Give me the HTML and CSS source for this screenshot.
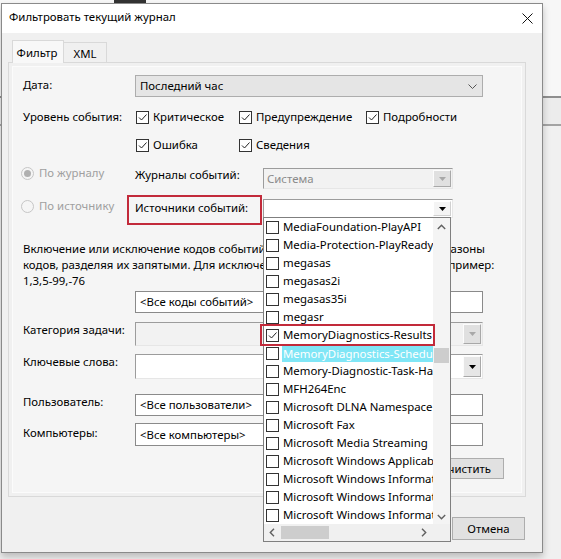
FILE: index.html
```html
<!DOCTYPE html>
<html lang="ru">
<head>
<meta charset="utf-8">
<title>Фильтровать текущий журнал</title>
<link rel="stylesheet" href="styles.css">
</head>
<body>
<div class="desktop">
  <div class="topmark"></div>
  <div class="dialog">
    <div class="titlebar">
      <span class="title">Фильтровать текущий журнал</span>
      <svg class="close" width="11" height="11" viewBox="0 0 11 11"><path d="M0.5 0.5L10.5 10.5M10.5 0.5L0.5 10.5" stroke="#111" stroke-width="1" fill="none"/></svg>
    </div>
    <div class="client">
      <div class="tabs">
        <div class="tab active">Фильтр</div>
        <div class="tab">XML</div>
      </div>
      <div class="panel">
        <div class="row row-date">
          <div class="label">Дата:</div>
          <div class="combo date-combo"><span class="ctext">Последний час</span>
            <svg class="chev" width="9" height="5" viewBox="0 0 9 5"><path d="M0.5 0.5L4.5 4.5L8.5 0.5" fill="none" stroke="#555" stroke-width="1"/></svg>
          </div>
        </div>
        <div class="row row-levels">
          <div class="label">Уровень события:</div>
          <div class="levels">
            <label class="chk"><span class="box"><svg width="11" height="11" viewBox="0 0 11 11"><path d="M2 5.5L4.5 8L9.5 2.5" fill="none" stroke="#222" stroke-width="1"/></svg></span>Критическое</label>
            <label class="chk"><span class="box"><svg width="11" height="11" viewBox="0 0 11 11"><path d="M2 5.5L4.5 8L9.5 2.5" fill="none" stroke="#222" stroke-width="1"/></svg></span>Предупреждение</label>
            <label class="chk"><span class="box"><svg width="11" height="11" viewBox="0 0 11 11"><path d="M2 5.5L4.5 8L9.5 2.5" fill="none" stroke="#222" stroke-width="1"/></svg></span>Подробности</label>
            <label class="chk"><span class="box"><svg width="11" height="11" viewBox="0 0 11 11"><path d="M2 5.5L4.5 8L9.5 2.5" fill="none" stroke="#222" stroke-width="1"/></svg></span>Ошибка</label>
            <label class="chk"><span class="box"><svg width="11" height="11" viewBox="0 0 11 11"><path d="M2 5.5L4.5 8L9.5 2.5" fill="none" stroke="#222" stroke-width="1"/></svg></span>Сведения</label>
          </div>
        </div>
        <div class="row row-src1">
          <div class="radio disabled"><span class="rb checked"></span>По журналу</div>
          <div class="sublabel">Журналы событий:</div>
          <div class="combo classic disabled sys-combo"><span class="ctext">Система</span>
            <span class="dbtn"><svg width="7" height="4" viewBox="0 0 7 4"><path d="M0 0H7L3.5 4Z" fill="#a8a8a8"/></svg></span>
          </div>
        </div>
        <div class="row row-src2">
          <div class="radio disabled"><span class="rb"></span>По источнику</div>
          <div class="sublabel marked">Источники событий:</div>
          <div class="combo classic src-combo">
            <span class="dbtn white"><svg width="7" height="4" viewBox="0 0 7 4"><path d="M0 0H7L3.5 4Z" fill="#000"/></svg></span>
            <div class="dropdown">
              <div class="items">
                <div class="li"><span class="cb"></span><span class="lt">MediaFoundation-PlayAPI</span></div>
                <div class="li"><span class="cb"></span><span class="lt">Media-Protection-PlayReady</span></div>
                <div class="li"><span class="cb"></span><span class="lt">megasas</span></div>
                <div class="li"><span class="cb"></span><span class="lt">megasas2i</span></div>
                <div class="li"><span class="cb"></span><span class="lt">megasas35i</span></div>
                <div class="li"><span class="cb"></span><span class="lt">megasr</span></div>
                <div class="li"><span class="cb"><svg width="11" height="11" viewBox="0 0 11 11"><path d="M2 5.5L4.5 8L9.5 2.5" fill="none" stroke="#222" stroke-width="1"/></svg></span><span class="lt">MemoryDiagnostics-Results</span></div>
                <div class="li sel"><span class="cb"></span><span class="lt">MemoryDiagnostics-Scheduled</span></div>
                <div class="li"><span class="cb"></span><span class="lt">Memory-Diagnostic-Task-Handler</span></div>
                <div class="li"><span class="cb"></span><span class="lt">MFH264Enc</span></div>
                <div class="li"><span class="cb"></span><span class="lt">Microsoft DLNA Namespace</span></div>
                <div class="li"><span class="cb"></span><span class="lt">Microsoft Fax</span></div>
                <div class="li"><span class="cb"></span><span class="lt">Microsoft Media Streaming</span></div>
                <div class="li"><span class="cb"></span><span class="lt">Microsoft Windows Applicability Engine</span></div>
                <div class="li"><span class="cb"></span><span class="lt">Microsoft Windows Information Protection</span></div>
                <div class="li"><span class="cb"></span><span class="lt">Microsoft Windows Information Store</span></div>
                <div class="li"><span class="cb"></span><span class="lt">Microsoft Windows Information Service</span></div>
              </div>
              <div class="vscroll">
                <svg class="arr" width="9" height="6" viewBox="0 0 9 6"><path d="M0.8 5L4.5 1.3L8.2 5" fill="none" stroke="#606060" stroke-width="1.4"/></svg>
                <div class="vtrack"><div class="vthumb"></div></div>
                <svg class="arr" width="9" height="6" viewBox="0 0 9 6"><path d="M0.8 1L4.5 4.7L8.2 1" fill="none" stroke="#606060" stroke-width="1.4"/></svg>
              </div>
              <div class="hscroll">
                <svg class="arr" width="6" height="9" viewBox="0 0 6 9"><path d="M5 0.8L1.3 4.5L5 8.2" fill="none" stroke="#606060" stroke-width="1.4"/></svg>
                <div class="htrack"><div class="hthumb"></div></div>
                <svg class="arr" width="6" height="9" viewBox="0 0 6 9"><path d="M1 0.8L4.7 4.5L1 8.2" fill="none" stroke="#606060" stroke-width="1.4"/></svg>
              </div>
              <div class="corner"></div>
              <div class="mark-box"></div>
            </div>
          </div>
        </div>
        <p class="desc">Включение или исключение кодов событий: введите номера кодов или диапазоны<br>кодов, разделяя их запятыми. Для исключения кода укажите знак минус. Например:<br>1,3,5-99,-76</p>
        <div class="row row-codes">
          <div class="label"></div>
          <div class="input">&lt;Все коды событий&gt;</div>
        </div>
        <div class="row row-cat">
          <div class="label">Категория задачи:</div>
          <div class="combo classic disabled wide">
            <span class="dbtn"><svg width="7" height="4" viewBox="0 0 7 4"><path d="M0 0H7L3.5 4Z" fill="#a8a8a8"/></svg></span>
          </div>
        </div>
        <div class="row row-kw">
          <div class="label">Ключевые слова:</div>
          <div class="combo classic wide white-bg">
            <span class="dbtn"><svg width="7" height="4" viewBox="0 0 7 4"><path d="M0 0H7L3.5 4Z" fill="#000"/></svg></span>
          </div>
        </div>
        <div class="row row-user">
          <div class="label">Пользователь:</div>
          <div class="input">&lt;Все пользователи&gt;</div>
        </div>
        <div class="row row-comp">
          <div class="label lower">Компьютеры:</div>
          <div class="input">&lt;Все компьютеры&gt;</div>
        </div>
        <div class="row row-clear">
          <button class="btn clear">Очистить</button>
        </div>
      </div>
      <div class="buttons">
        <button class="btn">ОК</button>
        <button class="btn">Отмена</button>
      </div>
    </div>
  </div>
</div>
</body>
</html>
```

FILE: styles.css
```css
* { box-sizing: border-box; }
html, body { margin: 0; padding: 0; }
body {
  width: 561px;
  height: 559px;
  overflow: hidden;
  font-family: "Noto Sans", "Segoe UI", sans-serif;
  font-size: 11.4px;
  color: #000;
  background: #f0f0f0;
}
.desktop {
  position: relative;
  width: 561px;
  height: 559px;
  background: linear-gradient(to bottom, #f7f7f7 0, #f7f7f7 96px, #8e8e8e 96px, #8e8e8e 98px, #ececec 98px, #ececec 124px, #a3a3a3 124px, #a3a3a3 126px, #f0f0f0 126px);
}
.topmark {
  position: absolute;
  left: 114px;
  top: 0;
  width: 32px;
  height: 3px;
  background: #333;
}
.dialog {
  position: absolute;
  left: 1px;
  top: 3px;
  width: 542px;
  height: 550px;
  border: 1px solid #8a8a8a;
  background: #f0f0f0;
  box-shadow: 0 4px 7px rgba(0, 0, 0, 0.22);
  display: flex;
  flex-direction: column;
}
.titlebar {
  height: 29px;
  background: #fff;
  display: flex;
  align-items: center;
  justify-content: space-between;
  padding: 0 9px 3px 7px;
  flex: none;
}
.title { line-height: 16px; }
.close { margin-top: 2px; }
.client { flex: 1; display: flex; flex-direction: column; }
.tabs {
  display: flex;
  align-items: flex-end;
  height: 22px;
  margin: 7px 0 0 10px;
  position: relative;
  z-index: 1;
}
.tab {
  height: 20px;
  border: 1px solid #d9d9d9;
  border-bottom: none;
  display: flex;
  align-items: center;
  justify-content: center;
  width: 44px;
  margin-left: -1px;
  padding-top: 1px;
  background: #f0f0f0;
}
.tab.active {
  width: 52px;
  height: 23px;
  margin-left: 0;
  margin-bottom: -1px;
  background: #f8f8f8;
  position: relative;
  z-index: 2;
  padding-top: 0;
  padding-right: 2px;
}
.panel {
  margin-left: 6px;
  width: 518px;
  height: 435px;
  border: 1px solid #d9d9d9;
  background: #f5f5f5;
  box-shadow: inset 0 0 0 3px #f0f0f0, inset 0 0 0 4px #fbfbfb;
  padding-left: 14px;
  display: flex;
  flex-direction: column;
}
.row { display: flex; align-items: flex-start; flex: none; }
.label { width: 112px; line-height: 16px; flex: none; }
.label.lower { margin-top: 2px; }
.row-date { margin-top: 12px; height: 22px; }
.row-date .label { margin-top: 2px; }
.combo {
  position: relative;
  display: flex;
  align-items: center;
}
.date-combo {
  width: 348px;
  height: 22px;
  background: #e5e5e5;
  border: 1px solid #adadad;
  padding-left: 4px;
  justify-content: space-between;
  padding-right: 5px;
}
.ctext { line-height: 16px; }
.row-levels { margin-top: 12px; height: 44px; }
.levels {
  display: grid;
  grid-template-columns: 103px 127px auto;
  grid-auto-rows: 16px;
  row-gap: 12px;
  margin-left: 1px;
}
.chk { display: flex; align-items: center; line-height: 16px; white-space: nowrap; }
.box {
  width: 13px;
  height: 13px;
  border: 1px solid #333;
  background: #fff;
  margin-right: 4px;
  flex: none;
  display: flex;
  align-items: center;
  justify-content: center;
}
.row-src1 { margin-top: 12px; height: 33px; }
.row-src2 { height: 43px; }
.radio {
  width: 114px;
  margin-left: -2px;
  display: flex;
  align-items: center;
  line-height: 16px;
  flex: none;
}
.radio.disabled { color: #a0a0a0; }
.rb {
  width: 13px;
  height: 13px;
  border-radius: 50%;
  border: 1px solid #c6c6c6;
  background: #f5f5f5;
  margin-right: 5px;
  display: flex;
  align-items: center;
  justify-content: center;
  flex: none;
}
.rb.checked::after {
  content: "";
  width: 7px;
  height: 7px;
  border-radius: 50%;
  background: #b0b0b0;
}
.sublabel { width: 128px; line-height: 16px; margin-top: 2px; flex: none; position: relative; }
.sublabel.marked::after {
  content: "";
  position: absolute;
  left: -8px;
  top: -5px;
  width: 131px;
  height: 26px;
  border: 2px solid #c22a3a;
}
.classic {
  border: 1px solid;
  border-color: #9c9c9c #e6e6e6 #e6e6e6 #9c9c9c;
  padding: 0 1px 0 3px;
}
.classic .dbtn { margin-left: auto; }
.classic.disabled { background: #f2f2f2; color: #8a8a8a; }
.sys-combo { width: 190px; height: 21px; margin-top: 3px; background: #f7f7f7; }
.src-combo { width: 190px; height: 19px; margin-top: 1px; background: #fff; }
.dbtn {
  width: 18px;
  height: calc(100% - 2px);
  display: flex;
  align-items: center;
  justify-content: center;
  background: #e6e6e6;
  border: 1px solid;
  border-color: #fcfcfc #a8a8a8 #a8a8a8 #fcfcfc;
}
.classic.disabled .dbtn { background: #e0e0e0; }
.dbtn.white { background: #f4f4f4; border-color: #fff #d0d0d0 #d0d0d0 #fff; }
.white-bg { background: #fff; }
.wide { width: 348px; }
.row-cat .combo { height: 24px; }
.row-kw .combo { height: 25px; }

.dropdown {
  position: absolute;
  left: -1px;
  top: 17px;
  width: 188px;
  height: 325px;
  border: 1px solid #7f7f7f;
  background: #fff;
  display: grid;
  grid-template-columns: 169px 17px;
  grid-template-rows: 306px 17px;
  z-index: 5;
  color: #000;
}
.items { overflow: hidden; }
.li {
  height: 18px;
  display: flex;
  align-items: center;
  padding-left: 2px;
  white-space: nowrap;
}
.cb {
  width: 13px;
  height: 13px;
  border: 1px solid #333;
  background: #fff;
  flex: none;
  margin-right: 4px;
  display: flex;
  align-items: center;
  justify-content: center;
}
.lt { line-height: 18px; }
.li.sel .lt {
  background: #80e6f6;
  color: #fff;
  flex: 1;
  margin-left: -1px;
  padding-left: 1px;
  height: 17px;
  line-height: 17px;
}
.mark-box {
  position: absolute;
  left: -4px;
  top: 106px;
  width: 175px;
  height: 22px;
  border: 2px solid #c22a3a;
}
.vscroll {
  background: #f4f4f4;
  display: flex;
  flex-direction: column;
  align-items: center;
  padding: 6px 0 4px;
}
.vtrack { flex: 1; width: 100%; position: relative; }
.vthumb {
  position: absolute;
  left: 1px;
  right: 1px;
  top: 118px;
  height: 15px;
  background: #cdcdcd;
}
.hscroll {
  background: #f0f0f0;
  display: flex;
  align-items: center;
  padding: 0 6px 0 5px;
}
.htrack { flex: 1; height: 100%; position: relative; margin: 0 4px; }
.hthumb {
  position: absolute;
  left: 2px;
  width: 48px;
  top: 2px;
  bottom: 2px;
  background: #cdcdcd;
}
.corner { background: #f0f0f0; }

.desc {
  margin: 0;
  height: 48px;
  line-height: 16px;
  width: 500px;
  white-space: nowrap;
  flex: none;
}
.input {
  width: 348px;
  border: 1px solid #8a8a8a;
  background: #fff;
  display: flex;
  align-items: center;
  padding-left: 4px;
  line-height: 16px;
}
.row-codes { margin-top: 2px; height: 22px; }
.row-codes .input { height: 22px; }
.row-cat { margin-top: 9px; height: 24px; }
.row-kw { margin-top: 8px; height: 25px; }
.row-user { margin-top: 15px; height: 22px; }
.row-user .input { height: 22px; }
.row-comp { margin-top: 7px; height: 23px; }
.row-comp .input { height: 23px; }
.row-clear { margin-top: 12px; height: 21px; justify-content: flex-end; padding-right: 21px; }
.btn {
  font-family: inherit;
  font-size: 11.4px;
  color: #000;
  background: #e1e1e1;
  border: 1px solid #adadad;
  height: 22px;
  padding: 0;
  margin: 0;
}
.clear { width: 78px; height: 21px; }
.buttons {
  display: flex;
  justify-content: flex-end;
  gap: 6px;
  margin-top: 20px;
  padding-right: 17px;
}
.buttons .btn { width: 73px; height: 23px; }
```
